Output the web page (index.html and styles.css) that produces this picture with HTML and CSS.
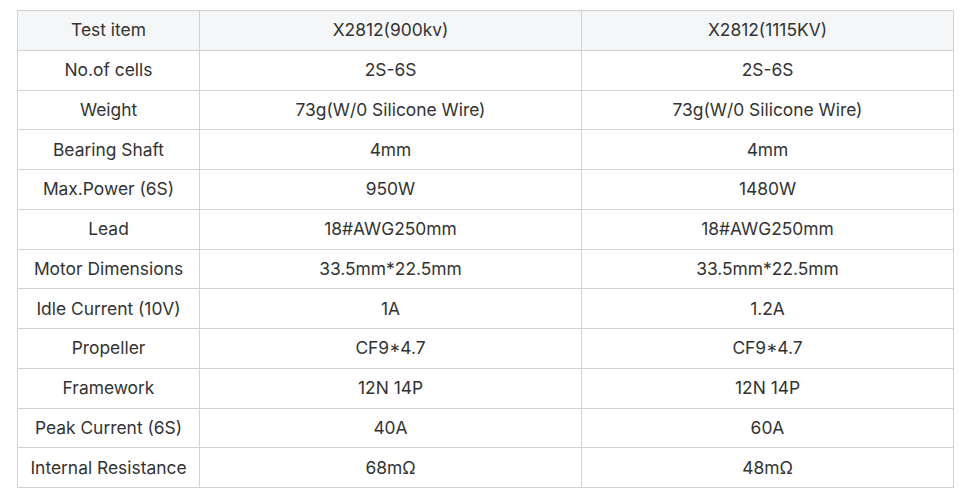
FILE: index.html
```html
<!DOCTYPE html>
<html>
<head>
<meta charset="utf-8">
<link rel="stylesheet" href="styles.css">
</head>
<body>
<table class="spec">
  <colgroup>
    <col class="c1"><col class="c2"><col class="c3">
  </colgroup>
  <tr class="head"><td>Test item</td><td>X2812(900kv)</td><td>X2812(1115KV)</td></tr>
  <tr><td>No.of cells</td><td>2S-6S</td><td>2S-6S</td></tr>
  <tr><td>Weight</td><td>73g(W/0 Silicone Wire)</td><td>73g(W/0 Silicone Wire)</td></tr>
  <tr><td>Bearing Shaft</td><td>4mm</td><td>4mm</td></tr>
  <tr><td>Max.Power (6S)</td><td>950W</td><td>1480W</td></tr>
  <tr><td>Lead</td><td>18#AWG250mm</td><td>18#AWG250mm</td></tr>
  <tr><td>Motor Dimensions</td><td>33.5mm*22.5mm</td><td>33.5mm*22.5mm</td></tr>
  <tr><td>Idle Current (10V)</td><td>1A</td><td>1.2A</td></tr>
  <tr><td>Propeller</td><td>CF9*4.7</td><td>CF9*4.7</td></tr>
  <tr><td>Framework</td><td>12N 14P</td><td>12N 14P</td></tr>
  <tr><td>Peak Current (6S)</td><td>40A</td><td>60A</td></tr>
  <tr><td>Internal Resistance</td><td>68mΩ</td><td>48mΩ</td></tr>
</table>
</body>
</html>
```
FILE: styles.css
```css
html, body {
  margin: 0;
  background: #ffffff;
}
body {
  padding: 10px 0 0 17px;
  font-family: Inter, "Noto Sans", sans-serif;
  font-size: 17.4px;
  color: #333333;
}
.spec {
  border-collapse: collapse;
  table-layout: fixed;
  width: 936px;
}
.c1 { width: 182px; }
.c2 { width: 382px; }
.c3 { width: 372px; }
.spec td {
  border: 1px solid #d2d2d2;
  text-align: center;
  vertical-align: middle;
  height: 38.75px;
  padding: 0 4px;
  line-height: 22px;
}
.spec .head td {
  background: #f5f6f7;
}
```
